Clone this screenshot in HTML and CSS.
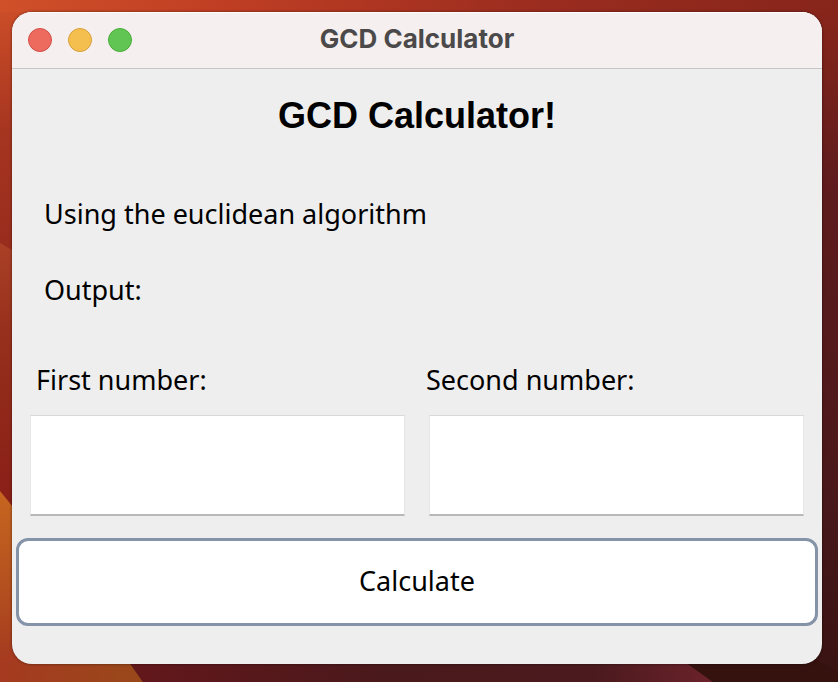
FILE: index.html
```html
<!DOCTYPE html>
<html lang="en">
<head>
<meta charset="utf-8">
<meta name="viewport" content="width=device-width, initial-scale=1">
<title>GCD Calculator</title>
<link rel="stylesheet" href="styles.css">
</head>
<body>
<svg class="wallpaper" viewBox="0 0 838 682" preserveAspectRatio="none" aria-hidden="true">
  <defs>
    <linearGradient id="top" x1="0" y1="0" x2="1" y2="0">
      <stop offset="0" stop-color="#cf5029"/>
      <stop offset=".25" stop-color="#c13f24"/>
      <stop offset=".65" stop-color="#9a2c1f"/>
      <stop offset="1" stop-color="#87251b"/>
    </linearGradient>
    <linearGradient id="left" x1="0" y1="0" x2="0" y2="1">
      <stop offset="0" stop-color="#cb4d28"/>
      <stop offset=".5" stop-color="#a63520"/>
      <stop offset="1" stop-color="#982c1d"/>
    </linearGradient>
    <linearGradient id="fold" x1="0" y1="0" x2="0" y2="1">
      <stop offset="0" stop-color="#aa4026"/>
      <stop offset=".3" stop-color="#97301c"/>
      <stop offset="1" stop-color="#861b16"/>
    </linearGradient>
    <linearGradient id="right" x1="0" y1="0" x2="0" y2="1">
      <stop offset="0" stop-color="#87251b"/>
      <stop offset=".1" stop-color="#77221b"/>
      <stop offset=".25" stop-color="#5f1b1d"/>
      <stop offset=".7" stop-color="#4b191b"/>
      <stop offset="1" stop-color="#381311"/>
    </linearGradient>
    <linearGradient id="amber" x1="0" y1="0" x2="0" y2="1">
      <stop offset="0" stop-color="#c66620"/>
      <stop offset=".5" stop-color="#b4501f"/>
      <stop offset=".9" stop-color="#a53a20"/>
    </linearGradient>
    <linearGradient id="amberFoot" x1="0" y1="0" x2="1" y2="0">
      <stop offset="0" stop-color="#a53a20"/>
      <stop offset="1" stop-color="#99481a"/>
    </linearGradient>
    <linearGradient id="bottom" x1="0" y1="0" x2="1" y2="0">
      <stop offset="0" stop-color="#65171b"/>
      <stop offset=".45" stop-color="#4a191b"/>
      <stop offset=".8" stop-color="#4a1a1e"/>
      <stop offset="1" stop-color="#6b222a"/>
    </linearGradient>
  </defs>
  <rect width="838" height="40" fill="url(#top)"/>
  <rect y="12" width="60" height="238" fill="url(#left)"/>
  <path d="M0 243 60 278V540H0z" fill="url(#fold)"/>
  <rect x="780" y="14" width="58" height="668" fill="url(#right)"/>
  <path d="M0 491 60 565V682H0z" fill="url(#amber)"/>
  <path d="M0 662H129L143 682H0z" fill="url(#amberFoot)"/>
  <path d="M114 640H654L713 682H143z" fill="url(#bottom)"/>
  <path d="M654 640H780L838 672V682H713z" fill="#35120e"/>
</svg>
<main class="window">
  <header class="titlebar">
    <div class="controls">
      <button class="dot dot-close" type="button" aria-label="Close"></button>
      <button class="dot dot-minimize" type="button" aria-label="Minimize"></button>
      <button class="dot dot-zoom" type="button" aria-label="Zoom"></button>
    </div>
    <div class="window-title">GCD Calculator</div>
  </header>
  <form class="content">
    <h1 class="heading">GCD Calculator!</h1>
    <div class="info">
      <p class="line">Using the euclidean algorithm</p>
      <p class="line">Output:</p>
    </div>
    <div class="labels">
      <label for="first">First number:</label>
      <label for="second">Second number:</label>
    </div>
    <div class="fields">
      <input class="input" id="first" type="text">
      <input class="input" id="second" type="text">
    </div>
    <button class="calculate" type="button">Calculate</button>
  </form>
</main>
</body>
</html>
```
FILE: styles.css
```css
* {
  box-sizing: border-box;
}

body {
  display: flex;
  min-height: 100vh;
  margin: 0;
  padding: 12px 16px 18px 12px;
  background: #4b191b;
  color: #000;
  font-family: "Noto Sans", sans-serif;
  font-size: 27px;
  line-height: 32px;
}

.wallpaper {
  position: absolute;
  inset: 0;
  z-index: -1;
  width: 100%;
  height: 100%;
}

.window {
  flex: 1;
  min-width: 0;
  overflow: hidden;
  border-radius: 20px;
  background: #eee;
  box-shadow: 0 0 3px rgba(0, 0, 0, 0.5);
}

.titlebar {
  display: grid;
  grid-template-columns: 1fr auto 1fr;
  align-items: center;
  height: 57px;
  padding: 0 16px;
  border-bottom: 1px solid #c6c6c6;
  background: #f5f0ef;
  box-shadow: inset 0 1px #fff;
}

.controls {
  display: flex;
  gap: 16px;
}

.dot {
  width: 24px;
  height: 24px;
  padding: 0;
  border: 1px solid;
  border-radius: 50%;
}

.dot-close {
  border-color: #d35048;
  background: #ec6a5e;
}

.dot-minimize {
  border-color: #d6a03c;
  background: #f5bf4f;
}

.dot-zoom {
  border-color: #4faa3c;
  background: #61c554;
}

.window-title {
  padding-bottom: 2px;
  color: #4b4949;
  font-family: Inter, sans-serif;
  font-size: 26px;
  font-weight: 700;
}

.content {
  display: flex;
  flex-direction: column;
  padding: 24px 4px 36px;
}

.heading {
  margin: 0;
  font-family: "Liberation Sans", sans-serif;
  font-size: 36px;
  line-height: 46px;
  text-align: center;
}

.info {
  display: grid;
  gap: 44px;
  padding: 59px 28px 58px;
}

.line {
  margin: 0;
}

.labels {
  display: grid;
  grid-template-columns: 1fr 1fr;
  gap: 18px;
  padding: 0 20px 19px;
}

.fields {
  display: grid;
  grid-template-columns: 1fr 1fr;
  gap: 24px;
  padding: 0 14px 22px;
}

.input {
  width: 100%;
  height: 101px;
  padding: 0 12px;
  border: 1px solid #e6e6e6;
  border-top-color: #d8d8d8;
  border-bottom: 2px solid #b8b8b8;
  background: #fff;
  font: inherit;
}

.calculate {
  height: 88px;
  padding: 0 12px 3px;
  border: 3px solid #8593a8;
  border-radius: 12px;
  background: #fff;
  color: inherit;
  font: inherit;
}
```
